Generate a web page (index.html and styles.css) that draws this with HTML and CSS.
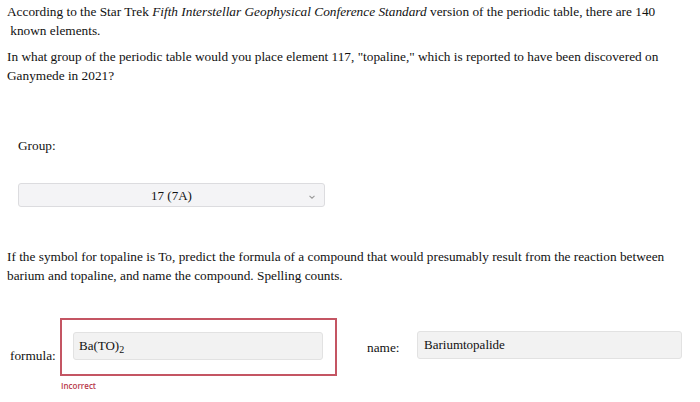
FILE: index.html
```html
<!DOCTYPE html>
<html lang="en">
<head>
<meta charset="utf-8">
<title>Topaline question</title>
<link rel="stylesheet" href="styles.css">
</head>
<body>
<main class="page">
  <p class="para first">According to the Star Trek <em>Fifth Interstellar Geophysical Conference Standard</em> version of the periodic table, there are 140 &nbsp;known elements.</p>
  <p class="para">In what group of the periodic table would you place element 117, "topaline," which is reported to have been discovered on Ganymede in 2021?</p>
  <div class="group-label">Group:</div>
  <div class="select">
    <span class="select-value">17 (7A)</span>
    <svg class="chevron" width="6" height="4" viewBox="0 0 6 4"><path d="M0.5 0.8 L3 3.2 L5.5 0.8" fill="none" stroke="#9a9a9a" stroke-width="1.1"/></svg>
  </div>
  <p class="para third">If the symbol for topaline is To, predict the formula of a compound that would presumably result from the reaction between barium and topaline, and name the compound. Spelling counts.</p>
  <div class="answer-row">
    <span class="label formula-label">formula:</span>
    <div class="field-wrap">
      <div class="wrong-box">
        <div class="input formula-input">Ba(TO)<sub>2</sub></div>
      </div>
      <div class="feedback">Incorrect</div>
    </div>
    <span class="label name-label">name:</span>
    <div class="input name-input">Bariumtopalide</div>
  </div>
</main>
</body>
</html>
```
FILE: styles.css
```css
html, body {
  margin: 0;
  padding: 0;
  background: #ffffff;
}
body {
  font-family: "Liberation Serif", "Times New Roman", serif;
  font-size: 13.3px;
  line-height: 19px;
  color: #111111;
}
.page {
  padding: 2px 0 0 7px;
}
.para {
  max-width: 668px;
  margin: 7px 0 0;
}
.para.first {
  margin-top: 0;
}
.group-label {
  margin: 51px 0 0 11px;
}
.select {
  margin: 28px 0 0 11px;
  width: 307px;
  height: 24px;
  box-sizing: border-box;
  border: 1px solid #dcdcdf;
  border-radius: 3px;
  background: #f4f4f6;
  display: flex;
  align-items: center;
  justify-content: center;
  position: relative;
  font-size: 13px;
}
.chevron {
  position: absolute;
  right: 9px;
  top: 11px;
}
.para.third {
  margin-top: 40px;
}
.answer-row {
  margin-top: 33px;
  display: flex;
  align-items: flex-start;
}
.answer-row > * {
  flex-shrink: 0;
}
.label {
  display: block;
}
.formula-label {
  margin: 28px 0 0 3px;
  width: 50px;
}
.field-wrap {
  display: flex;
  flex-direction: column;
}
.wrong-box {
  width: 277px;
  height: 58px;
  box-sizing: border-box;
  border: 2px solid #c45563;
  padding: 12px 0 0 11px;
}
.input {
  box-sizing: border-box;
  height: 28px;
  border: 1px solid #e2e2e2;
  border-radius: 3px;
  background: #f2f2f2;
  font-size: 13px;
  line-height: 26px;
  padding-left: 5px;
  color: #111;
}
.formula-input {
  width: 250px;
}
.formula-input sub {
  font-size: 10px;
  line-height: 0;
  vertical-align: -3px;
}
.feedback {
  margin: 5px 0 0 1px;
  font-family: "Open Sans", "Liberation Sans", sans-serif;
  font-size: 8px;
  line-height: 10px;
  font-weight: 600;
  color: #b8384a;
}
.name-label {
  margin: 20px 0 0 30px;
  width: 50px;
}
.name-input {
  margin-top: 13px;
  width: 265px;
  padding-left: 6px;
}
```
